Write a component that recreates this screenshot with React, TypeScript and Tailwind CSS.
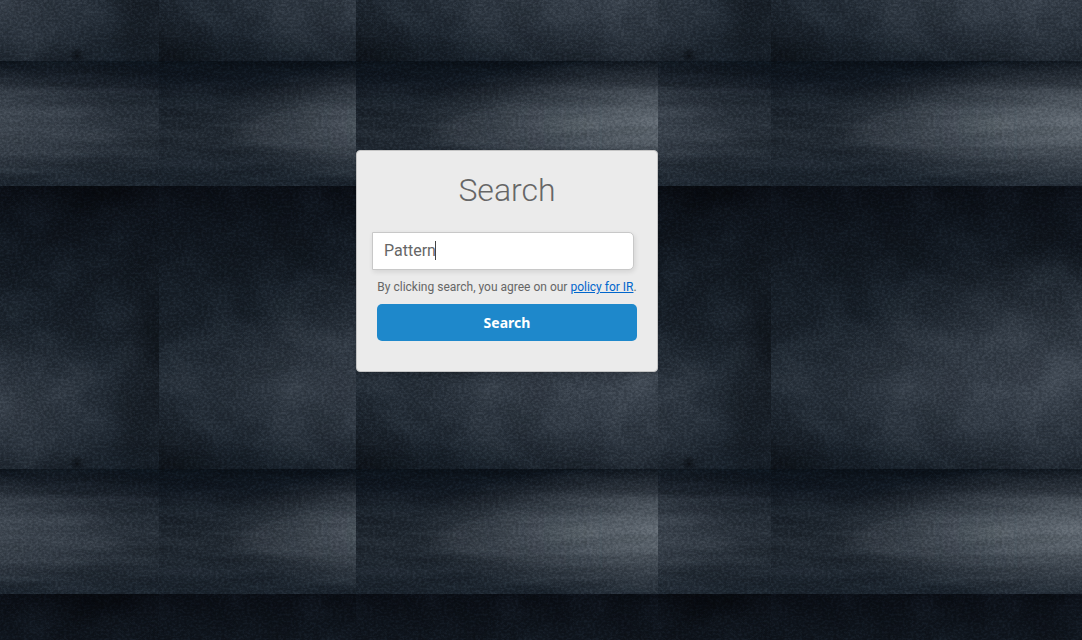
import { useId } from "react";

type BackdropProps = { originX: number; originY: number };

/** Repeating slate wall and floor artwork, drawn as one 612 x 408 tile. */
function SlateBackdrop({ originX, originY }: BackdropProps) {
  const id = useId();
  const ref = (name: string) => `url(#${id}${name})`;
  return (
    <svg className="absolute inset-0 h-full w-full" aria-hidden="true">
      <defs>
        <linearGradient id={`${id}wall`} x1="0" y1="0" x2="0" y2="1">
          <stop offset="0" stopColor="#0a0e15" />
          <stop offset="0.12" stopColor="#0e141c" />
          <stop offset="0.4" stopColor="#161e27" />
          <stop offset="0.7" stopColor="#1f2832" />
          <stop offset="0.9" stopColor="#1c252f" />
          <stop offset="1" stopColor="#141c25" />
        </linearGradient>
        <linearGradient id={`${id}floor`} x1="0" y1="0" x2="0" y2="1">
          <stop offset="0" stopColor="#0b121a" />
          <stop offset="0.15" stopColor="#0f161f" />
          <stop offset="0.35" stopColor="#1a222b" />
          <stop offset="0.6" stopColor="#1f2730" />
          <stop offset="1" stopColor="#1a232d" />
        </linearGradient>
        <radialGradient id={`${id}glow`}>
          <stop offset="0" stopColor="#6d767f" />
          <stop offset="0.3" stopColor="#656e77" stopOpacity="0.85" />
          <stop offset="0.65" stopColor="#535c66" stopOpacity="0.5" />
          <stop offset="1" stopColor="#4a535e" stopOpacity="0" />
        </radialGradient>
        <radialGradient id={`${id}haze`}>
          <stop offset="0" stopColor="#434c57" stopOpacity="0.85" />
          <stop offset="0.5" stopColor="#3a434e" stopOpacity="0.5" />
          <stop offset="1" stopColor="#343d48" stopOpacity="0" />
        </radialGradient>
        <radialGradient id={`${id}shade`}>
          <stop offset="0" stopColor="#05070b" stopOpacity="0.75" />
          <stop offset="1" stopColor="#05070b" stopOpacity="0" />
        </radialGradient>
        <linearGradient id={`${id}wedge`} x1="0" y1="0" x2="1" y2="0">
          <stop offset="0" stopColor="#77818b" stopOpacity="0.14" />
          <stop offset="1" stopColor="#77818b" stopOpacity="0" />
        </linearGradient>
        <filter id={`${id}soften`}>
          <feGaussianBlur stdDeviation="3" />
        </filter>
        <filter id={`${id}grain`} x="0" y="0" width="100%" height="100%" colorInterpolationFilters="sRGB">
          <feTurbulence type="fractalNoise" baseFrequency="0.35 0.45" numOctaves="3" seed="8" />
          <feColorMatrix values="2.4 0 0 0 -0.7  2.4 0 0 0 -0.7  2.4 0 0 0 -0.7  0 0 0 0 1" />
        </filter>
        <filter id={`${id}mottle`} x="0" y="0" width="100%" height="100%" colorInterpolationFilters="sRGB">
          <feTurbulence type="fractalNoise" baseFrequency="0.02 0.024" numOctaves="6" seed="21" />
          <feColorMatrix values="2.6 0 0 0 -0.8  2.6 0 0 0 -0.8  2.6 0 0 0 -0.8  0 0 0 0 1" />
        </filter>
        <filter id={`${id}streak`} x="0" y="0" width="100%" height="100%" colorInterpolationFilters="sRGB">
          <feTurbulence type="fractalNoise" baseFrequency="0.012 0.1" numOctaves="4" seed="5" />
          <feColorMatrix values="2.4 0 0 0 -0.7  2.4 0 0 0 -0.7  2.4 0 0 0 -0.7  0 0 0 0 1" />
        </filter>
        <clipPath id={`${id}wallArea`}>
          <rect width="612" height="283" />
        </clipPath>
        <clipPath id={`${id}floorArea`}>
          <rect y="283" width="612" height="125" />
        </clipPath>
        <pattern id={`${id}tile`} x={originX} y={originY} width="612" height="408" patternUnits="userSpaceOnUse">
          <g clipPath={ref("wallArea")}>
            <rect width="612" height="283" fill={ref("wall")} />
            <ellipse cx="280" cy="190" rx="210" ry="130" fill={ref("haze")} />
            <ellipse cx="150" cy="200" rx="180" ry="75" fill={ref("haze")} opacity="0.5" />
            <ellipse cx="460" cy="225" rx="130" ry="85" fill={ref("haze")} opacity="0.8" />
            <ellipse cx="255" cy="210" rx="60" ry="35" fill={ref("haze")} opacity="0.4" />
            <ellipse cx="0" cy="270" rx="60" ry="50" fill={ref("shade")} opacity="0.6" />
            <ellipse cx="612" cy="180" rx="50" ry="160" fill={ref("shade")} opacity="0.6" />
            <ellipse cx="530" cy="277" rx="8" ry="7" fill={ref("shade")} opacity="0.8" />
            <ellipse cx="560" cy="0" rx="110" ry="50" fill={ref("shade")} opacity="0.8" />
            <rect width="612" height="283" filter={ref("mottle")} opacity="0.1" className="mix-blend-soft-light" />
          </g>
          <g clipPath={ref("floorArea")}>
            <rect y="283" width="612" height="125" fill={ref("floor")} />
            <ellipse cx="315" cy="346" rx="265" ry="68" fill={ref("glow")} opacity="0.85" />
            <ellipse cx="490" cy="344" rx="190" ry="68" fill={ref("haze")} opacity="0.7" />
            <path
              d="M74 355 L110 336 L170 326 L260 318 V388 L170 376 L110 366 Z"
              fill={ref("wedge")}
              filter={ref("soften")}
            />
            <rect y="283" width="612" height="125" filter={ref("streak")} opacity="0.09" className="mix-blend-soft-light" />
          </g>
          <rect width="612" height="408" filter={ref("grain")} opacity="0.16" className="mix-blend-soft-light" />
        </pattern>
      </defs>
      <rect width="100%" height="100%" fill={ref("tile")} />
    </svg>
  );
}

function SearchForm() {
  return (
    <form
      className="relative rounded border border-[#c4c4c4] bg-[#ebebeb] px-[15px] pt-[19px] pb-[30px] shadow-md"
      onSubmit={(event) => event.preventDefault()}
    >
      <h1 className="text-center text-[32px] leading-10 font-light text-[#666666]">
        <label htmlFor="query">Search</label>
      </h1>
      <div className="relative mt-[22px] mr-2">
        <input
          id="query"
          type="text"
          defaultValue="Pattern"
          className="peer block h-[38px] w-full rounded-r-[5px] border border-[#c8c8c8] bg-white px-[11px] pb-[2px] text-base text-[#666666] shadow-[1px_2px_5px_rgba(0,0,0,0.1)] outline-none"
        />
        <span className="absolute top-[9px] left-[63px] h-[19px] w-px bg-[#444444] peer-focus:hidden" />
      </div>
      <p className="mt-2 text-center text-xs leading-[18px] whitespace-nowrap text-[#666666]">
        By clicking search, you agree on our{" "}
        <a href="#policy" className="text-[#0066cc] underline">
          policy for IR
        </a>
        .
      </p>
      <div className="mt-2 px-[5px]">
        <button
          type="submit"
          className="h-[37px] w-full rounded-[5px] bg-[#1e88cb] font-['Noto_Sans',sans-serif] text-sm font-bold text-white"
        >
          Search
        </button>
      </div>
    </form>
  );
}

export default function App() {
  return (
    <div className="relative isolate flex min-h-screen justify-center overflow-hidden bg-[#141b24] pr-[68px] font-[Roboto,sans-serif]">
      <SlateBackdrop originX={159} originY={186} />
      <main className="relative w-[302px] pt-[150px]">
        <SlateBackdrop originX={0} originY={186} />
        <SearchForm />
      </main>
    </div>
  );
}
